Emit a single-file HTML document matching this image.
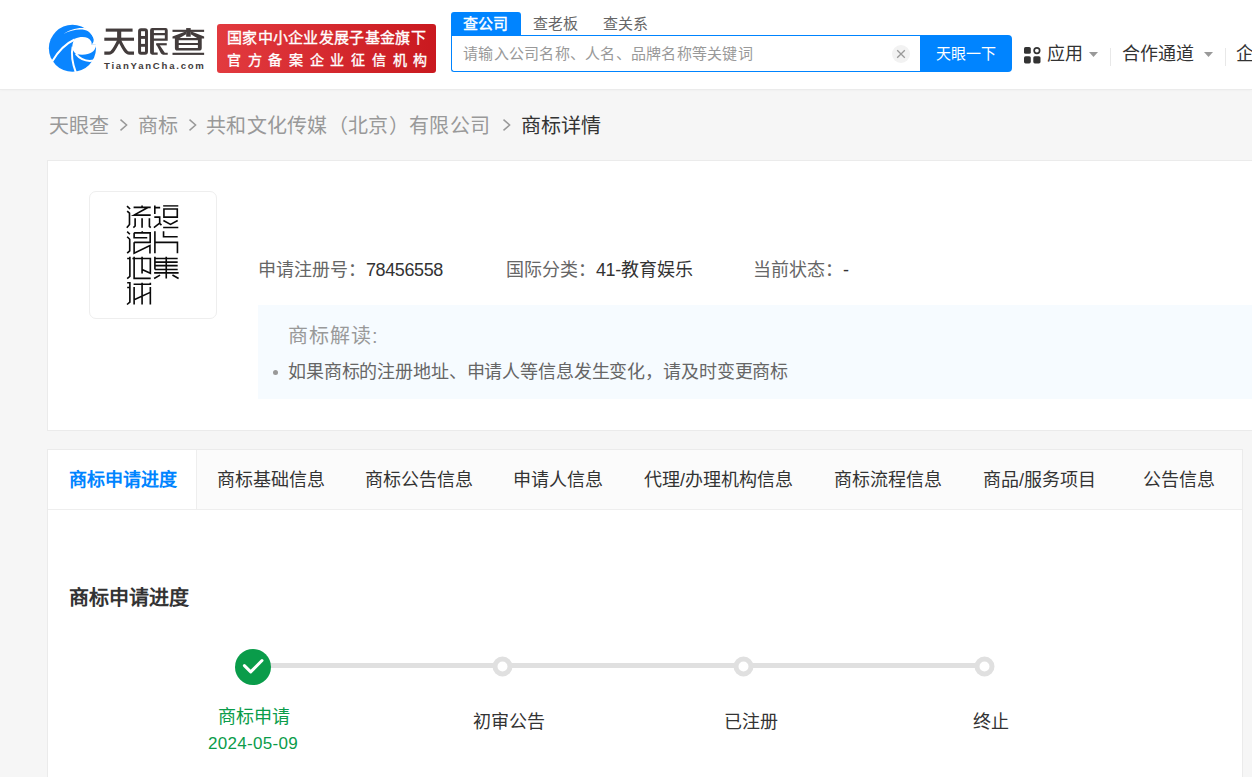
<!DOCTYPE html>
<html lang="zh-CN">
<head>
<meta charset="utf-8">
<style>
*{margin:0;padding:0;box-sizing:border-box}
html,body{width:1252px;height:777px;overflow:hidden;background:#f6f6f6;font-family:"Liberation Sans",sans-serif;color:#333}
.a{position:absolute;white-space:nowrap}
#hdr{position:absolute;left:0;top:0;width:1252px;height:90px;background:#fff;border-bottom:1px solid #ebebeb;box-shadow:0 1px 2px rgba(0,0,0,0.025)}
.badge{left:217px;top:24px;width:219px;height:48.5px;-webkit-text-stroke:0.35px #fff;border-radius:3px;background:linear-gradient(90deg,#e23a3f,#c9191f);color:#fff}
.tab{top:12px;height:23px;font-size:15px;line-height:23px;color:#666}
.info{top:258px;font-size:18px;line-height:24px;color:#666}.v{color:#333}
.sep{top:119px;width:9px;height:12px}
.card{position:absolute;background:#fff;border:1px solid #ebebeb}
</style>
</head>
<body>
<div id="hdr">
  <svg class="a" style="left:46px;top:22px" width="52" height="52" viewBox="0 0 777 777">
<circle cx="395" cy="393" r="352" fill="#0a85ff"/>
<g fill="#fff">
<path d="M262 180 C360 125 480 100 580 118 C650 135 705 190 712 260 C714 290 705 315 680 335 L800 335 L800 0 L560 0 L600 94 C470 78 350 115 262 180Z"/>
<path d="M430 252 C520 205 640 215 676 290 C684 310 684 325 678 335 L800 330 L800 365 L748 358 C730 450 640 510 452 482 C420 450 395 420 392 380 C395 320 410 280 430 252Z"/>
</g>
<g fill="none" stroke="#fff" stroke-width="30" stroke-linecap="butt">
<path d="M428 262 C300 320 180 440 92 590"/>
<path d="M398 370 C370 500 395 620 448 760"/>
<path d="M445 478 C520 570 620 595 720 575"/>
</g>
</svg>
  <svg class="a" style="left:100px;top:24px" width="110" height="36" viewBox="0 0 2295.7 751.3">
<g fill="#433c3c">
<rect x="120" y="95" width="560" height="65"/>
<rect x="90" y="285" width="620" height="65"/>
<rect x="357" y="140" width="86" height="180"/>
</g>
<g fill="none" stroke="#433c3c" stroke-width="68" stroke-linejoin="round">
<path d="M395 340 C330 460 270 610 190 610 L90 610"/>
<path d="M405 340 C470 460 530 610 610 610 L710 610"/>
<rect x="826" y="120" width="144" height="490" rx="30" stroke-width="62"/>
</g>
<g fill="#433c3c">
<rect x="840" y="250" width="120" height="60"/>
<rect x="840" y="415" width="120" height="60"/>
<path d="M1045 130 Q1045 85 1090 85 H1370 Q1413 85 1413 130 V350 H1125 V595 H1203 V640 H1090 Q1045 640 1045 595Z M1125 130 V190 H1353 V130Z M1125 235 V300 H1353 V235Z" fill-rule="evenodd"/>
<rect x="1173" y="400" width="220" height="45"/>
<path d="M1173 420 L1233 420 L1353 600 L1413 600 L1413 640 L1320 640 Q1290 640 1270 610Z"/>
<rect x="1513" y="120" width="660" height="45"/>
<rect x="1798" y="85" width="95" height="180"/>
<path d="M1798 150 L1513 262 L1513 305 L1643 305 L1798 215Z"/>
<path d="M1893 150 L2173 262 L2173 305 L2043 305 L1893 215Z"/>
<path d="M1563 290 H2123 V500 Q2123 555 2068 555 H1618 Q1563 555 1563 500Z M1643 340 V395 H2043 V340Z M1643 440 V500 H2043 V440Z" fill-rule="evenodd"/>
<rect x="1513" y="600" width="660" height="45"/>
</g>
</svg>

  <div class="a" style="left:104px;top:59px;font-size:9.6px;line-height:14px;font-weight:bold;color:#433c3c;letter-spacing:1.75px">TianYanCha.com</div>
  <div class="a badge">
    <div class="a" style="left:10px;top:4px;font-size:15px;line-height:20px;letter-spacing:0.3px">国家中小企业发展子基金旗下</div>
    <div class="a" style="left:10px;top:26px;font-size:14px;line-height:20px;letter-spacing:6.7px">官方备案企业征信机构</div>
  </div>
  <div class="a" style="left:451px;top:12px;width:70px;height:24px;background:#0084ff;border-radius:3px 3px 0 0"></div>
  <div class="a tab" style="left:463px;color:#fff;-webkit-text-stroke:0.4px #fff">查公司</div>
  <div class="a tab" style="left:533px">查老板</div>
  <div class="a tab" style="left:603px">查关系</div>
  <div class="a" style="left:451px;top:35px;width:470px;height:37px;border:1px solid #0084ff;border-right:none;border-radius:0 0 0 3px"></div>
  <div class="a" style="left:463px;top:44px;font-size:15px;line-height:20px;color:#999;letter-spacing:0.25px">请输入公司名称、人名、品牌名称等关键词</div>
  <svg class="a" style="left:892px;top:45px" width="18" height="18" viewBox="0 0 18 18"><circle cx="9" cy="9" r="9" fill="#f2f2f2"/><path d="M5.2 5.2L12.8 12.8M12.8 5.2L5.2 12.8" stroke="#999" stroke-width="1.3"/></svg>
  <div class="a" style="left:920px;top:35px;width:92px;height:37px;background:#0084ff;border-radius:0 4px 4px 0;color:#fff;font-size:15px;line-height:37px;text-align:center">天眼一下</div>
  <!-- apps icon -->
  <svg class="a" style="left:1023px;top:46px" width="18" height="18" viewBox="0 0 18 18">
    <rect x="1" y="1" width="6.8" height="6.8" rx="1.6" fill="#333"/>
    <circle cx="13.9" cy="4.6" r="2.75" fill="none" stroke="#333" stroke-width="1.7"/>
    <rect x="1" y="10.2" width="6.8" height="7.2" rx="1.6" fill="#333"/>
    <rect x="10.3" y="10.2" width="7.2" height="7.2" rx="1.6" fill="#333"/>
  </svg>
  <div class="a" style="left:1047px;top:42px;font-size:18px;line-height:24px;color:#333">应用</div>
  <svg class="a" style="left:1089px;top:52px" width="9" height="5"><path d="M0 0H9L4.5 5Z" fill="#999"/></svg>
  <div class="a" style="left:1110px;top:48px;width:1px;height:18px;background:#e8e8e8"></div>
  <div class="a" style="left:1122px;top:42px;font-size:18px;line-height:24px;color:#333">合作通道</div>
  <svg class="a" style="left:1204px;top:52px" width="9" height="5"><path d="M0 0H9L4.5 5Z" fill="#999"/></svg>
  <div class="a" style="left:1225px;top:48px;width:1px;height:18px;background:#e8e8e8"></div>
  <div class="a" style="left:1236px;top:42px;font-size:18px;line-height:24px;color:#333">企业</div>
</div>

<!-- breadcrumb -->
<div class="a" style="left:49px;top:113px;font-size:20px;line-height:26px;color:#999">天眼查</div>
<svg class="a sep" style="left:119px" viewBox="0 0 9 12"><path d="M1.5 0.6L7.6 6L1.5 11.4" fill="none" stroke="#999" stroke-width="1.5"/></svg>
<svg class="a sep" style="left:188px" viewBox="0 0 9 12"><path d="M1.5 0.6L7.6 6L1.5 11.4" fill="none" stroke="#999" stroke-width="1.5"/></svg>
<svg class="a sep" style="left:502px" viewBox="0 0 9 12"><path d="M1.5 0.6L7.6 6L1.5 11.4" fill="none" stroke="#999" stroke-width="1.5"/></svg>
<div class="a" style="left:138px;top:113px;font-size:20px;line-height:26px;color:#999">商标</div>
<div class="a" style="left:206px;top:113px;font-size:20px;line-height:26px;color:#999;letter-spacing:0.3px">共和文化传媒（北京）有限公司</div>
<div class="a" style="left:521px;top:113px;font-size:20px;line-height:26px;color:#333">商标详情</div>

<!-- card 1 -->
<div class="card" style="left:47px;top:160px;width:1220px;height:271px"></div>
<div class="a" style="left:89px;top:191px;width:128px;height:128px;border:1px solid #eee;border-radius:7px;background:#fff"></div>
<svg class="a" style="left:122px;top:200px" width="60" height="110" viewBox="0 0 777 1424">
<g fill="none" stroke="#0a0a0a" stroke-width="21" stroke-linecap="butt" stroke-linejoin="miter">
<!-- 流 -->
<path d="M65 78L105 116M67 143L97 171V316L62 358"/>
<path d="M150 96H372M260 71V96M335 96L155 196H372"/>
<path d="M170 236V336L147 358M260 236V358M355 236V341L372 358"/>
<!-- 短 -->
<path d="M425 71V181M425 98H494M418 221H488V298L413 358M486 301L511 326"/>
<path d="M533 76H729" stroke-width="18"/>
<path d="M543 116H716V221H543Z"/>
<path d="M536 266L628 316L721 266M533 356H729"/>
<!-- 浪 -->
<path d="M67 410L102 443M67 475L100 508V658L67 688"/>
<path d="M262 405V425M157 425H365V548H157M157 425V488H327M157 548V688L362 590V693"/>
<!-- 片 -->
<path d="M426 405V690M538 405V475H721M426 548H718V690"/>
<!-- 地 -->
<path d="M67 757H102M102 734V989L67 1017"/>
<path d="M135 757H367V949L260 899M157 734V1014H372M260 734V952"/>
<!-- 集 -->
<path d="M426 734V899M573 734V1017M426 757H721M426 804H721M426 849H721M426 899H721M416 944H733M493 972L416 1017M653 972L733 1017"/>
<!-- 球 -->
<path d="M67 1071H102V1321L65 1353M67 1133H102"/>
<path d="M150 1091H367V1071M157 1128V1353M260 1071V1353M367 1128V1353M157 1291L365 1196"/>
</g>
</svg>


<div class="a info" style="left:258px">申请注册号：<span class="v" style="letter-spacing:-0.4px">78456558</span></div>
<div class="a info" style="left:506px">国际分类：<span class="v"><span style="letter-spacing:-0.4px">41-</span>教育娱乐</span></div>
<div class="a info" style="left:753px">当前状态：<span class="v">-</span></div>

<div class="a" style="left:258px;top:305px;width:1000px;height:94px;background:#f6fbff"></div>
<div class="a" style="left:288px;top:323px;font-size:20px;line-height:26px;color:#999;letter-spacing:1px">商标解读:</div>
<div class="a" style="left:273px;top:370px;width:5px;height:5px;border-radius:50%;background:#999"></div>
<div class="a" style="left:288px;top:360px;font-size:18px;line-height:24px;color:#666;letter-spacing:-0.14px">如果商标的注册地址、申请人等信息发生变化，请及时变更商标</div>

<!-- card 2 -->
<div class="card" style="left:47px;top:449px;width:1196px;height:340px"></div>
<div class="a" style="left:48px;top:450px;width:1194px;height:60px;background:#fbfbfb;border-bottom:1px solid #eee"></div>
<div class="a" style="left:48px;top:450px;width:149px;height:59px;background:#fff;border-right:1px solid #eee"></div>
<div class="a" style="left:69px;top:468px;font-size:18px;line-height:24px;color:#0084ff;font-weight:bold">商标申请进度</div>
<div class="a" style="left:217px;top:468px;font-size:18px;line-height:24px;color:#333">商标基础信息</div>
<div class="a" style="left:365px;top:468px;font-size:18px;line-height:24px;color:#333">商标公告信息</div>
<div class="a" style="left:513px;top:468px;font-size:18px;line-height:24px;color:#333">申请人信息</div>
<div class="a" style="left:644px;top:468px;font-size:18px;line-height:24px;color:#333">代理/办理机构信息</div>
<div class="a" style="left:834px;top:468px;font-size:18px;line-height:24px;color:#333">商标流程信息</div>
<div class="a" style="left:983px;top:468px;font-size:18px;line-height:24px;color:#333">商品/服务项目</div>
<div class="a" style="left:1143px;top:468px;font-size:18px;line-height:24px;color:#333">公告信息</div>

<div class="a" style="left:69px;top:585px;font-size:20px;line-height:26px;color:#333;font-weight:bold">商标申请进度</div>

<div class="a" style="left:253px;top:663px;width:731px;height:5px;background:#e0e0e0"></div>
<svg class="a" style="left:235px;top:649px" width="36" height="36" viewBox="0 0 36 36">
  <circle cx="18" cy="18" r="18" fill="#0a9c4a"/>
  <path d="M9.4 16.6L15.7 22.9L27 11.5" fill="none" stroke="#fff" stroke-width="3" stroke-linecap="round" stroke-linejoin="round"/>
</svg>
<svg class="a" style="left:492px;top:656px" width="21" height="21"><circle cx="10.5" cy="10.5" r="7.5" fill="#fff" stroke="#e0e0e0" stroke-width="5"/></svg>
<svg class="a" style="left:733px;top:656px" width="21" height="21"><circle cx="10.5" cy="10.5" r="7.5" fill="#fff" stroke="#e0e0e0" stroke-width="5"/></svg>
<svg class="a" style="left:974px;top:656px" width="21" height="21"><circle cx="10.5" cy="10.5" r="7.5" fill="#fff" stroke="#e0e0e0" stroke-width="5"/></svg>

<div class="a" style="left:218px;top:705px;font-size:18px;line-height:24px;color:#0a9c4a">商标申请</div>
<div class="a" style="left:208px;top:732px;font-size:17px;line-height:24px;color:#0a9c4a;letter-spacing:0.3px">2024-05-09</div>
<div class="a" style="left:473px;top:709.5px;font-size:18px;line-height:24px;color:#333">初审公告</div>
<div class="a" style="left:724px;top:709.5px;font-size:18px;line-height:24px;color:#333">已注册</div>
<div class="a" style="left:973px;top:709.5px;font-size:18px;line-height:24px;color:#333">终止</div>
</body>
</html>
